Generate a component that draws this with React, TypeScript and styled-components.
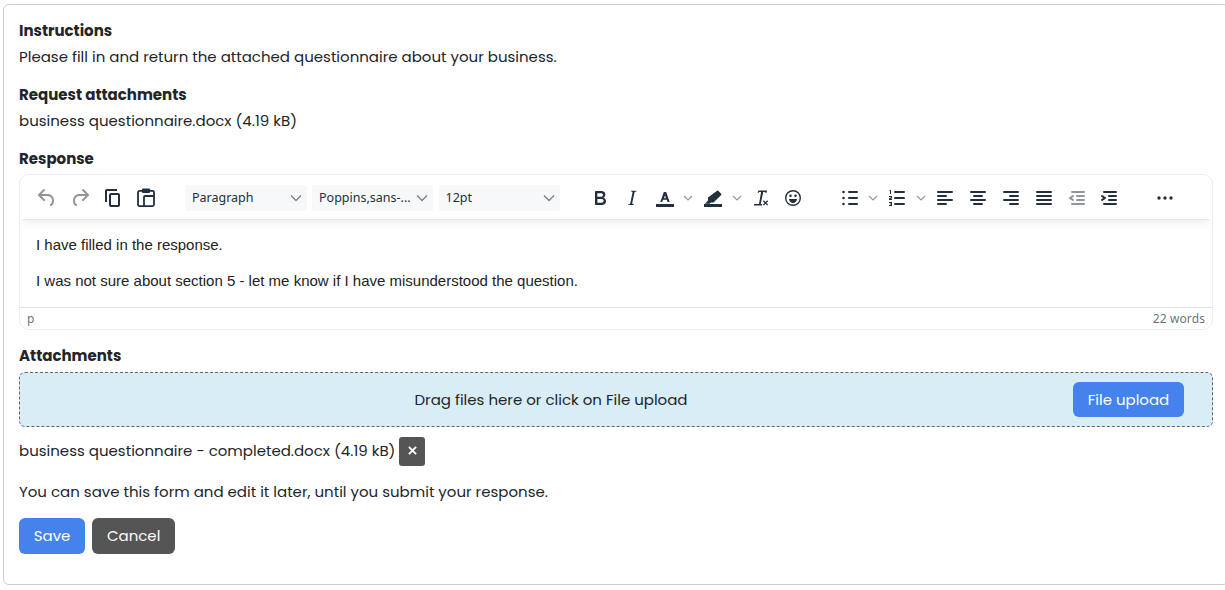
import React from "react";
import styled, { createGlobalStyle } from "styled-components";

const Global = createGlobalStyle`
  html, body { margin: 0; padding: 0; background: #fff; overflow: hidden; }
  body { font-family: Poppins, "Inter", "Noto Sans", sans-serif; color: #212529; }
`;
const Page = styled.div`
  width: 1225px; height: 590px; overflow: hidden; padding: 4px 0 0 3px; box-sizing: border-box;
`;
const Panel = styled.section`
  width: 1226px; height: 581px; box-sizing: border-box; border: 1px solid #ccc; border-radius: 6px;
  padding: 13px 15px 30px;
  font-size: 15px; line-height: 26px;
`;
const Heading = styled.h3<{ $gap?: number }>`
  margin: 0 0 ${p => p.$gap ?? 0}px; font-size: 15px; line-height: 26px; font-weight: 700; color: #212529;
`;
const Text = styled.p`
  margin: 0 0 12px; color: #212529;
`;
const Editor = styled.div`
  height: 156px; box-sizing: border-box; border: 1px solid #eee; border-radius: 10px; display: flex; flex-direction: column;
  overflow: hidden; margin-bottom: 13px;
`;
const Toolbar = styled.div`
  height: 44px; flex: none; box-sizing: border-box; padding: 1px 0 0 10px; display: flex; align-items: center; background: #fff;
  box-shadow: 0 2px 2px -2px rgba(34,47,62,.2), 0 8px 8px -4px rgba(34,47,62,.07);
  position: relative; z-index: 1; font-family: "Noto Sans", sans-serif;
`;
const Tool = styled.span<{ $w?: number; $dim?: boolean; $ml?: number }>`
  width: ${p => p.$w ?? 32}px; flex: none; margin-left: ${p => p.$ml ?? 0}px; height: 24px; display: flex; justify-content: center; align-items: center;
  svg { width: 24px; height: 24px; fill: #222f3e; stroke: #222f3e; stroke-width: 0; opacity: ${p => p.$dim ? .5 : 1}; display: block; }
`;
const Chevron = styled.span<{ $ml?: number }>`
  width: 14px; flex: none; margin-left: ${p => p.$ml ?? 0}px; display: flex; justify-content: center;
  svg { width: 10px; height: 10px; fill: none; stroke: #222f3e; stroke-opacity: .5; stroke-width: 1.2; display: block; }
`;
const Select = styled.span<{ $w: number; $ml: number }>`
  width: ${p => p.$w}px; margin-left: ${p => p.$ml}px; height: 26px; flex: none; box-sizing: border-box; background: #f7f8f9; border-radius: 3px;
  display: flex; align-items: center; justify-content: space-between; padding: 0 5px 0 7px;
  font-size: 12.5px; color: #222f3e; white-space: nowrap;
  svg { width: 12px; height: 12px; fill: none; stroke: #222f3e; stroke-opacity: .6; stroke-width: 1.3; }
`;
const Content = styled.div`
  flex: 1; padding: 0 16px; font-family: "Liberation Sans", Arial, sans-serif; font-size: 15px; line-height: 20px; color: #222;
  p { margin: 16px 0; }
`;
const StatusBar = styled.div`
  height: 23px; flex: none; box-sizing: border-box; border-top: 1px solid #e3e3e3; display: flex; align-items: center; justify-content: space-between;
  padding: 0 7px 0; font-family: "Noto Sans", sans-serif; font-size: 12px; letter-spacing: .1px; color: rgba(34,47,62,.7);
`;
const Drop = styled.div`
  height: 55px; box-sizing: border-box; border: 1px dashed #666; border-radius: 6px; background: #d9edf7;
  position: relative; display: flex; align-items: center; justify-content: center; padding-right: 130px; margin-bottom: 10px;
`;
const Button = styled.button<{ $tone?: "blue" | "dark" }>`
  font: inherit; height: 36px; padding: 0 13.75px; border: 1px solid transparent; border-radius: 6px; color: #fff;
  background: ${p => p.$tone === "dark" ? "#555" : "#4582ec"}; cursor: pointer; display: inline-flex; align-items: center;
`;
const UploadButton = styled(Button)`
  position: absolute; right: 28px; top: 9px; height: 35px;
`;
const FileRow = styled.div`
  display: flex; align-items: flex-start; height: 29px; gap: 4px; margin-bottom: 13px; line-height: 28px;
`;
const RemoveButton = styled.button`
  width: 26px; height: 29px; padding: 0; border: 0; border-radius: 3px; background: #555; color: #fff; display: flex; align-items: center; justify-content: center;
  svg { width: 9px; height: 9px; margin-top: -3px; stroke: #fff; stroke-width: 2; fill: none; }
`;
const Note = styled.p` margin: 0 0 13px; `;
const Actions = styled.div` display: flex; gap: 7px; `;

const I = ({ d }: { d: string }) => <svg viewBox="0 0 24 24"><path d={d} fillRule="evenodd" /></svg>;
const PasteIcon = () => (
  <svg viewBox="0 0 24 24">
    <rect x="4" y="4.900" width="16" height="15.200" rx="1.500" fill="none" style={{ strokeWidth: 1.8 }} />
    <rect x="8" y="2.500" width="8" height="4.500" rx="1" />
    <path d="M10 20v-9a1 1 0 0 1 1-1h9" fill="none" style={{ strokeWidth: 1.8 }} />
  </svg>
);
const Chev = () => <svg viewBox="0 0 10 10"><path d="M1 3l4 4 4-4" /></svg>;
const SelChev = () => <svg viewBox="0 0 12 12"><path d="M1 3.5l5 5 5-5" /></svg>;

const lines3 = "M11 5h8a1 1 0 0 1 0 2h-8a1 1 0 0 1 0-2Zm0 6h8a1 1 0 0 1 0 2h-8a1 1 0 0 1 0-2Zm0 6h8a1 1 0 0 1 0 2h-8a1 1 0 0 1 0-2Z";
const icons = {
  undo: "M6.4 8H12c3.7 0 6.2 2 6.8 5.1.6 2.7-.4 5.6-2.3 6.8a1 1 0 0 1-1-1.8c1.1-.6 1.8-2.7 1.4-4.6-.5-2.1-2.1-3.5-4.9-3.5H6.4l3.3 3.3a1 1 0 1 1-1.4 1.4l-5-5a1 1 0 0 1 0-1.4l5-5a1 1 0 0 1 1.4 1.4L6.4 8Z",
  redo: "M17.6 8H12c-3.7 0-6.2 2-6.8 5.1-.6 2.7.4 5.6 2.3 6.8a1 1 0 0 0 1-1.8c-1.1-.6-1.8-2.7-1.4-4.6.5-2.1 2.1-3.5 4.9-3.5h5.6l-3.3 3.3a1 1 0 1 0 1.4 1.4l5-5a1 1 0 0 0 0-1.4l-5-5a1 1 0 0 0-1.4 1.4L17.600 8Z",
  copy: "M16 3H6a2 2 0 0 0-2 2v11h2V5h10V3Zm1 4a2 2 0 0 1 2 2v10a2 2 0 0 1-2 2h-7a2 2 0 0 1-2-2V9c0-1.2.9-2 2-2h7Zm0 12V9h-7v10h7Z",
  bold: "M7.8 19c-.3 0-.5 0-.6-.2l-.2-.5V5.700c0-.2 0-.4.2-.5l.6-.2h5c1.500 0 2.700.3 3.500 1 .7.600 1.100 1.400 1.100 2.500a3 3 0 0 1-.6 1.900c-.4.600-1 1-1.600 1.200.4.100.9.3 1.300.6s.8.7 1 1.200c.4.4.5 1 .5 1.600 0 1.300-.4 2.300-1.300 3-.8.7-2.100 1-3.800 1H7.800Zm5-8.300c.6 0 1.200-.1 1.600-.5.4-.3.6-.7.6-1.300 0-1.100-.8-1.700-2.300-1.700H9.300v3.500h3.500Zm.5 6c.7 0 1.300-.1 1.700-.4.4-.4.6-.9.6-1.500s-.2-1-.7-1.400c-.4-.3-1-.4-2-.4H9.400v3.800h3.900Z",
  italic: "M16.700 4.700l-.1.9h-.3c-.6 0-1 0-1.400.3-.3.3-.4.6-.5 1.100l-2.100 9.800v.6c0 .5.4.8 1.400.8h.2l-.2.8H8l.2-.8h.2c1.100 0 1.800-.5 2-1.500l2-9.800.1-.5c0-.6-.4-.8-1.400-.8h-.3l.2-.9h5.900Z",
  forecolor: "M3 18h18v3H3v-3ZM10.800 6h2.400l3.500 10h-2.100l-.7-2.200h-3.800L9.100 16H7.300l3.500-10Zm.300 6.300h1.800l-.9-3-.9 3Z",
  hilite: "M3 18h18v3H3v-3ZM15.700 5a1.200 1.200 0 0 1 1.700 0l2.600 2.600a1.200 1.200 0 0 1 0 1.700L12.500 16.500H10l-1.500 1.300H4l3-3.300V11.500L15.700 5Z",
  clear: "M9.500 4.500h8.500l-.3 2.300h-1.500l.1-.8h-2L11.700 18H13v1.500H5V18h5l2.100-12h-2l-.3.800H8.600L9.500 4.500ZM14.800 14.300l1.700 1.700 1.700-1.700.9.900-1.700 1.700 1.700 1.700-.9.900-1.700-1.700-1.700 1.700-.9-.9 1.700-1.700-1.700-1.700.9-.9Z",
  emoji: "M12 4a8 8 0 1 1 0 16 8 8 0 0 1 0-16Zm0 1.400a6.600 6.600 0 1 0 0 13.200 6.600 6.600 0 0 0 0-13.200ZM9.500 8.500a1.300 1.300 0 1 1 0 2.600 1.300 1.300 0 0 1 0-2.600Zm5 0a1.300 1.300 0 1 1 0 2.600 1.300 1.300 0 0 1 0-2.600ZM8 13h8c0 2.200-1.800 4-4 4s-4-1.800-4-4Z",
  bullist: lines3 + "M5.500 4.700a1.300 1.300 0 1 1 0 2.600 1.300 1.300 0 0 1 0-2.600Zm0 6a1.300 1.300 0 1 1 0 2.600 1.300 1.300 0 0 1 0-2.600Zm0 6a1.300 1.300 0 1 1 0 2.600 1.300 1.300 0 0 1 0-2.600Z",
  numlist: "M10 5h9a1 1 0 0 1 0 2h-9a1 1 0 0 1 0-2Zm0 6h9a1 1 0 0 1 0 2h-9a1 1 0 0 1 0-2Zm0 6h9a1 1 0 0 1 0 2h-9a1 1 0 0 1 0-2ZM4.500 4H6v4H5V5h-.5V4ZM4 10h3v2.400L5.200 13H7v1H4v-1.800L6 11.400V11H4v-1Zm0 6h3v4H4v-1h2v-.600H4.800v-.8H6V17H4v-1Z",
  left: "M5 5h14a1 1 0 0 1 0 2H5a1 1 0 1 1 0-2Zm0 4h8a1 1 0 0 1 0 2H5a1 1 0 0 1 0-2Zm0 8h8a1 1 0 0 1 0 2H5a1 1 0 0 1 0-2Zm0-4h14a1 1 0 0 1 0 2H5a1 1 0 0 1 0-2Z",
  center: "M5 5h14a1 1 0 0 1 0 2H5a1 1 0 1 1 0-2Zm3 4h8a1 1 0 0 1 0 2H8a1 1 0 1 1 0-2Zm0 8h8a1 1 0 0 1 0 2H8a1 1 0 0 1 0-2Zm-3-4h14a1 1 0 0 1 0 2H5a1 1 0 0 1 0-2Z",
  right: "M5 5h14a1 1 0 0 1 0 2H5a1 1 0 1 1 0-2Zm6 4h8a1 1 0 0 1 0 2h-8a1 1 0 0 1 0-2Zm0 8h8a1 1 0 0 1 0 2h-8a1 1 0 0 1 0-2Zm-6-4h14a1 1 0 0 1 0 2H5a1 1 0 0 1 0-2Z",
  justify: "M5 5h14a1 1 0 0 1 0 2H5a1 1 0 1 1 0-2Zm0 4h14a1 1 0 0 1 0 2H5a1 1 0 1 1 0-2Zm0 4h14a1 1 0 0 1 0 2H5a1 1 0 0 1 0-2Zm0 4h14a1 1 0 0 1 0 2H5a1 1 0 0 1 0-2Z",
  outdent: "M7 5h12a1 1 0 0 1 0 2H7a1 1 0 1 1 0-2Zm5 4h7a1 1 0 0 1 0 2h-7a1 1 0 0 1 0-2Zm0 4h7a1 1 0 0 1 0 2h-7a1 1 0 0 1 0-2Zm-5 4h12a1 1 0 0 1 0 2H7a1 1 0 0 1 0-2Zm1.600-3.800a1 1 0 0 1-1.200 1.600l-3-2a1 1 0 0 1 0-1.600l3-2a1 1 0 0 1 1.200 1.600L6.800 12l1.800 1.200Z",
  indent: "M7 5h12a1 1 0 0 1 0 2H7a1 1 0 1 1 0-2Zm5 4h7a1 1 0 0 1 0 2h-7a1 1 0 0 1 0-2Zm0 4h7a1 1 0 0 1 0 2h-7a1 1 0 0 1 0-2Zm-5 4h12a1 1 0 0 1 0 2H7a1 1 0 0 1 0-2Zm-2.600-3.800L6.200 12l-1.800-1.200a1 1 0 0 1 1.200-1.600l3 2a1 1 0 0 1 0 1.600l-3 2a1 1 0 1 1-1.200-1.600Z",
  more: "M6 10.300a1.700 1.700 0 1 1 0 3.400 1.700 1.700 0 0 1 0-3.400Zm6 0a1.700 1.700 0 1 1 0 3.400 1.700 1.700 0 0 1 0-3.400Zm6 0a1.700 1.700 0 1 1 0 3.400 1.700 1.700 0 0 1 0-3.400Z",
};

export default function App() {
  return (
    <Page>
      <Global />
      <Panel>
        <Heading>Instructions</Heading>
        <Text>Please fill in and return the attached questionnaire about your business.</Text>
        <Heading>Request attachments</Heading>
        <Text>business questionnaire.docx (4.19 kB)</Text>
        <Heading $gap={2}>Response</Heading>
        <Editor>
          <Toolbar>
            <Tool $w={32} $ml={1} $dim><I d={icons.undo} /></Tool>
            <Tool $w={33} $dim><I d={icons.redo} /></Tool>
            <Tool $w={30} $ml={2}><I d={icons.copy} /></Tool>
            <Tool $w={30} $ml={3}><PasteIcon /></Tool>
            <Select $w={122} $ml={24}>Paragraph<SelChev /></Select>
            <Select $w={121} $ml={5}>Poppins,sans-...<SelChev /></Select>
            <Select $w={121.5} $ml={5.5}>12pt<SelChev /></Select>
            <Tool $ml={24}><I d={icons.bold} /></Tool>
            <Tool><I d={icons.italic} /></Tool>
            <Tool $ml={1}><I d={icons.forecolor} /></Tool>
            <Chevron><Chev /></Chevron>
            <Tool $ml={2}><I d={icons.hilite} /></Tool>
            <Chevron $ml={1}><Chev /></Chevron>
            <Tool $ml={1}><I d={icons.clear} /></Tool>
            <Tool><I d={icons.emoji} /></Tool>
            <Tool $ml={25}><I d={icons.bullist} /></Tool>
            <Chevron><Chev /></Chevron>
            <Tool $ml={1}><I d={icons.numlist} /></Tool>
            <Chevron $ml={1}><Chev /></Chevron>
            <Tool $w={33}><I d={icons.left} /></Tool>
            <Tool $w={33}><I d={icons.center} /></Tool>
            <Tool $w={33}><I d={icons.right} /></Tool>
            <Tool $w={33}><I d={icons.justify} /></Tool>
            <Tool $w={33} $dim><I d={icons.outdent} /></Tool>
            <Tool $w={32}><I d={icons.indent} /></Tool>
            <Tool $ml={24}><I d={icons.more} /></Tool>
          </Toolbar>
          <Content>
            <p>I have filled in the response.</p>
            <p>I was not sure about section 5 - let me know if I have misunderstood the question.</p>
          </Content>
          <StatusBar><span>p</span><span>22 words</span></StatusBar>
        </Editor>
        <Heading $gap={3}>Attachments</Heading>
        <Drop>
          Drag files here or click on File upload
          <UploadButton type="button">File upload</UploadButton>
        </Drop>
        <FileRow>
          business questionnaire - completed.docx (4.19 kB)
          <RemoveButton type="button" aria-label="Remove"><svg viewBox="0 0 10 10"><path d="M1 1l8 8M9 1l-8 8" /></svg></RemoveButton>
        </FileRow>
        <Note>You can save this form and edit it later, until you submit your response.</Note>
        <Actions>
          <Button type="button">Save</Button>
          <Button type="button" $tone="dark">Cancel</Button>
        </Actions>
      </Panel>
    </Page>
  );
}
